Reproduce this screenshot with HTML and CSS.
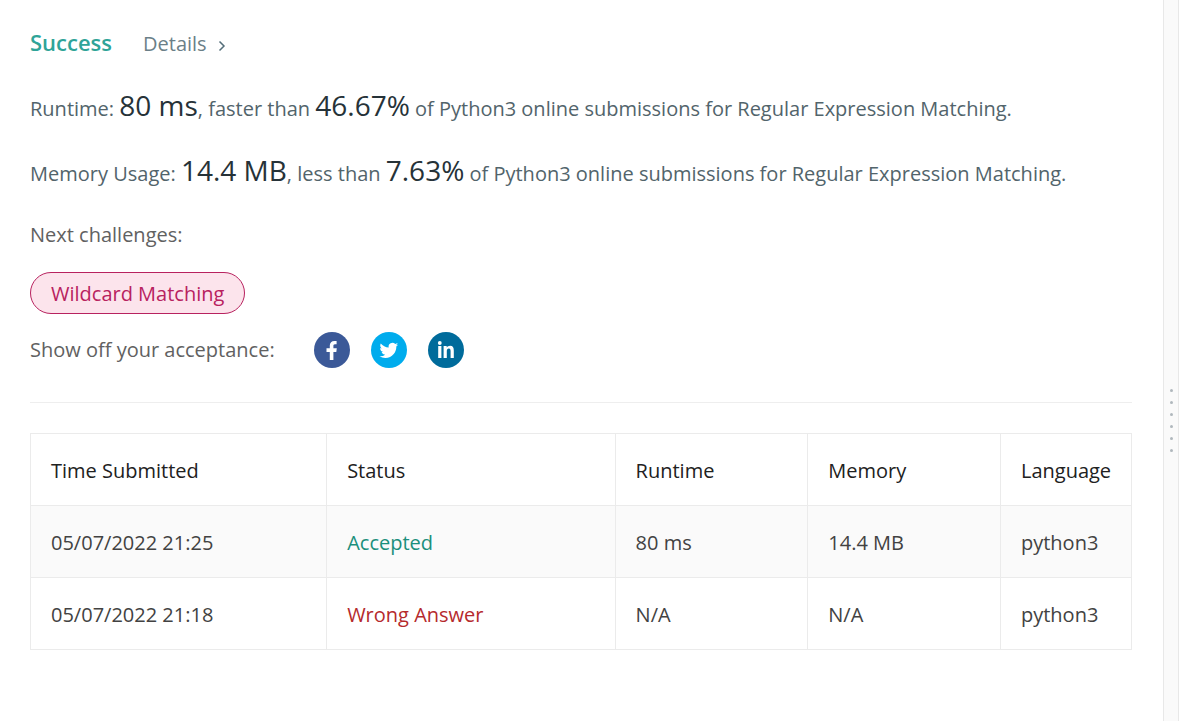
FILE: index.html
```html
<!DOCTYPE html>
<html lang="en">
<head>
<meta charset="utf-8">
<title>Submission Result</title>
<link rel="stylesheet" href="styles.css">
</head>
<body>
<div class="layout">
  <main class="panel">
    <header class="result-head">
      <h1 class="result-status">Success</h1>
      <a class="details" href="#details">Details
        <svg class="chevron" viewBox="0 0 8 12" aria-hidden="true"><path d="M1.500 1.500 6 6 1.500 10.500"/></svg>
      </a>
    </header>
    <p class="stat">Runtime: <span class="value">80 ms</span>, faster than <span class="value">46.67%</span> of Python3 online submissions for Regular Expression Matching.</p>
    <p class="stat">Memory Usage: <span class="value">14.4 MB</span>, less than <span class="value">7.63%</span> of Python3 online submissions for Regular Expression Matching.</p>
    <p class="next">Next challenges:</p>
    <a class="challenge" href="#wildcard-matching">Wildcard Matching</a>
    <div class="share">
      <span class="share-label">Show off your acceptance:</span>
      <a class="social facebook" href="#facebook" aria-label="Facebook">
        <svg viewBox="0 0 36 36" aria-hidden="true"><path d="M15.800 28V20H12.500V16.300H15.800V13.600C15.800 10.500 17.600 8.900 20.400 8.900C21.500 8.900 22.300 9 22.600 9V12.300H21C19.700 12.300 19.400 13 19.400 14V16.300H22.800L22.300 20H19.400V28Z"/></svg>
      </a>
      <a class="social twitter" href="#twitter" aria-label="Twitter">
        <svg viewBox="0 0 36 36" aria-hidden="true"><path transform="translate(8.500 9) scale(.78)" d="M23.953 4.570a10 10 0 0 1-2.825.775 4.958 4.958 0 0 0 2.163-2.723c-.951.555-2.005.959-3.127 1.184a4.920 4.920 0 0 0-8.384 4.482C7.690 8.095 4.067 6.130 1.640 3.162a4.822 4.822 0 0 0-.666 2.475c0 1.710.870 3.213 2.188 4.096a4.904 4.904 0 0 1-2.228-.616v.060a4.923 4.923 0 0 0 3.946 4.827 4.996 4.996 0 0 1-2.212.085 4.936 4.936 0 0 0 4.604 3.417 9.867 9.867 0 0 1-6.102 2.105c-.390 0-.779-.023-1.170-.067a13.995 13.995 0 0 0 7.557 2.209c9.053 0 13.998-7.496 13.998-13.985 0-.210 0-.420-.015-.630A9.935 9.935 0 0 0 24 4.590z"/></svg>
      </a>
      <a class="social linkedin" href="#linkedin" aria-label="LinkedIn">
        <svg viewBox="0 0 36 36" aria-hidden="true"><circle cx="11.800" cy="11" r="1.900"/><path d="M10.200 14H13.400V26H10.200ZM15.600 14H18.700V15.600C19.400 14.400 20.600 13.700 22.100 13.700C24.900 13.700 25.800 15.500 25.800 18.600V26H22.600V19.300C22.600 17.500 22.100 16.600 20.900 16.600C19.500 16.600 18.800 17.600 18.800 19.300V26H15.600Z"/></svg>
      </a>
    </div>
    <table class="submissions">
      <thead>
        <tr><th class="col-time" scope="col">Time Submitted</th><th class="col-status" scope="col">Status</th><th class="col-metric" scope="col">Runtime</th><th class="col-metric" scope="col">Memory</th><th scope="col">Language</th></tr>
      </thead>
      <tbody>
        <tr><td>05/07/2022 21:25</td><td><a class="accepted" href="#accepted">Accepted</a></td><td>80 ms</td><td>14.4 MB</td><td>python3</td></tr>
        <tr><td>05/07/2022 21:18</td><td><a class="wrong" href="#wrong-answer">Wrong Answer</a></td><td>N/A</td><td>N/A</td><td>python3</td></tr>
      </tbody>
    </table>
  </main>
  <div class="splitter" role="separator" aria-orientation="vertical">
    <i class="dot"></i><i class="dot"></i><i class="dot"></i><i class="dot"></i><i class="dot"></i><i class="dot"></i>
  </div>
</div>
</body>
</html>
```
FILE: styles.css
```css
* {
  box-sizing: border-box;
}

body {
  margin: 0;
  background: #fff;
  color: #424242;
  font-family: "Open Sans", "Noto Sans", sans-serif;
  font-size: 20px;
  line-height: 28px;
}

a {
  text-decoration: none;
}

.layout {
  display: flex;
  min-height: 100vh;
}

.panel {
  flex: 1;
  min-width: 0;
  padding: 28px 31px 28px 30px;
}

.result-head {
  display: flex;
  align-items: baseline;
  gap: 31px;
  margin-bottom: 27px;
}

.result-status {
  margin: 0;
  color: #2fa498;
  font-size: 22px;
  font-weight: 600;
}

.details {
  display: flex;
  align-items: center;
  gap: 11px;
  color: #6b7f88;
}

.chevron {
  width: 8px;
  height: 12px;
  margin-top: 4px;
  fill: none;
  stroke: #546e7a;
  stroke-width: 1.5;
}

.stat {
  margin: 0 0 21px;
  color: #52646b;
  line-height: 40px;
}

.value {
  color: #263238;
  font-size: 28px;
}

.next {
  margin: 27px 0 23px;
  color: #616161;
}

.challenge {
  display: inline-block;
  padding: 7px 20px 5px;
  border: 1px solid #b8225f;
  border-radius: 21px;
  background: #fce4ec;
  color: #b8225f;
}

.share {
  display: flex;
  align-items: center;
  gap: 21px;
  padding-bottom: 34px;
  margin: 18px 0 30px;
  border-bottom: 1px solid #eee;
  color: #616161;
}

.share-label {
  margin-right: 18px;
}

.social {
  width: 36px;
  height: 36px;
  border-radius: 50%;
}

.social svg {
  display: block;
  fill: #fff;
}

.facebook {
  background: #3b5998;
}

.twitter {
  background: #00aced;
}

.linkedin {
  background: #006b9b;
}

.submissions {
  width: 100%;
  border-collapse: collapse;
  table-layout: fixed;
}

.submissions th,
.submissions td {
  height: 72px;
  padding: 2px 20px 0;
  border: 1px solid #ebebeb;
  font-weight: 400;
  text-align: left;
  white-space: nowrap;
}

.submissions th {
  color: #212121;
}

.submissions tbody tr:nth-child(odd) {
  background: #fafafa;
}

.col-time {
  width: 26.9%;
}

.col-status {
  width: 26.2%;
}

.col-metric {
  width: 17.5%;
}

.accepted {
  color: #1b8f7c;
}

.wrong {
  color: #b52a2d;
}

.splitter {
  display: flex;
  flex-direction: column;
  align-items: center;
  justify-content: center;
  gap: 9px;
  width: 16px;
  margin-right: 1px;
  padding-top: 120px;
  border: solid #e8e8e8;
  border-width: 0 1px;
  background: #fafafa;
}

.dot {
  width: 3px;
  height: 3px;
  border-radius: 50%;
  background: #b0b8bd;
}
```
